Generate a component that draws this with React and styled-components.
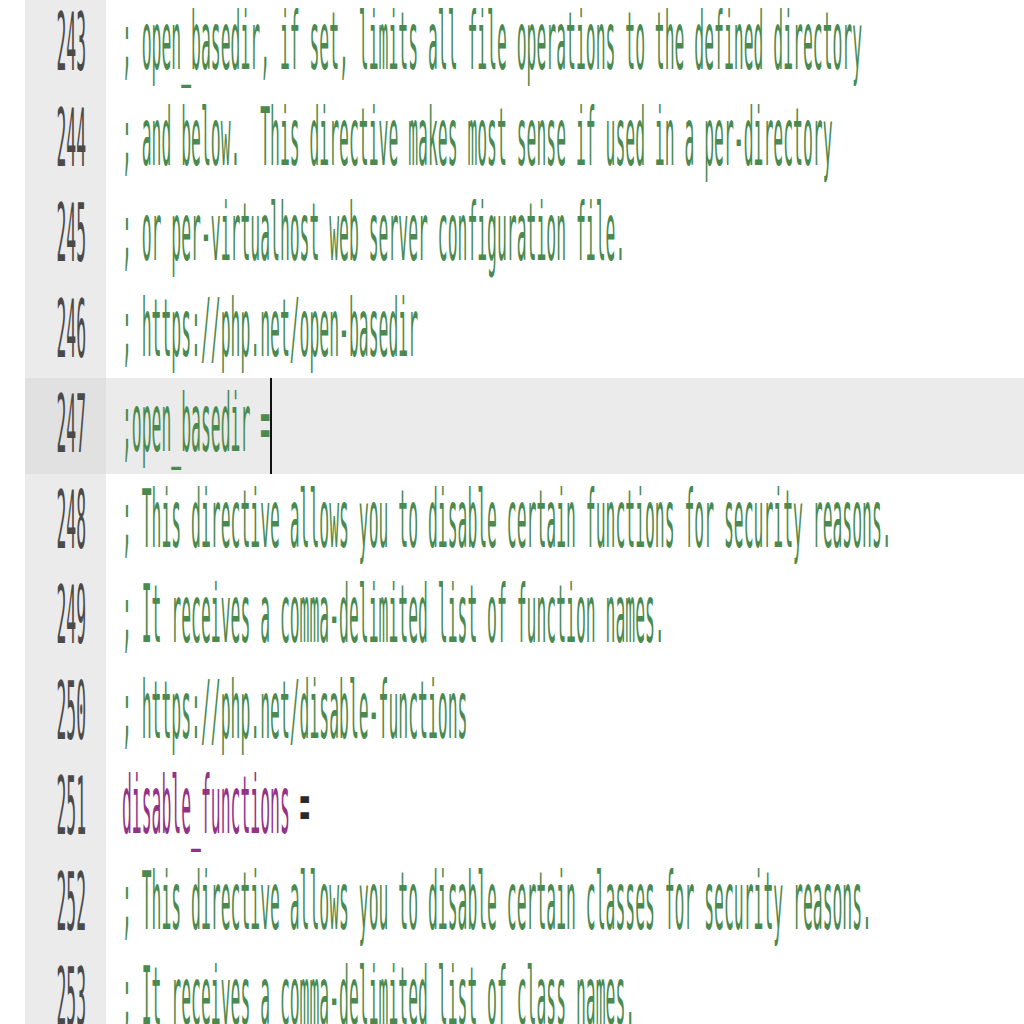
import React from "react";
import styled, { createGlobalStyle } from "styled-components";

const GlobalStyle = createGlobalStyle`
  html, body {
    margin: 0;
    padding: 0;
    background: #ffffff;
  }
`;

const Page = styled.div`
  width: 1024px;
  height: 1024px;
  overflow: hidden;
  background: #ffffff;
  padding-left: 25px;
  box-sizing: border-box;
`;

const Editor = styled.div`
  display: flex;
  flex-direction: column;
  margin-top: -4px;
  font-family: "DejaVu Sans Mono", "Liberation Mono", monospace;
  font-size: 16.4px;
`;

const Row = styled.div`
  display: grid;
  grid-template-columns: 81px 1fr;
  height: 95.5px;
  background: ${(p) => (p.$active ? "#ebebeb" : "#ffffff")};
`;

const Num = styled.div`
  display: flex;
  align-items: center;
  justify-content: flex-end;
  padding-right: 20px;
  background: ${(p) => (p.$active ? "#e1e1e1" : "#ebebeb")};
  color: #4a4a4a;
`;

const Code = styled.div`
  display: flex;
  align-items: stretch;
  padding-left: 16px;
`;

const Text = styled.span`
  display: inline-flex;
  align-items: center;
  white-space: pre;
  transform: scaleY(4.9);
  transform-origin: center;
`;

const Tok = styled.span`
  color: ${(p) => p.$color};
`;

const Caret = styled.span`
  width: 2px;
  background: #111111;
`;

const GREEN = "#4a8a50";
const PURPLE = "#923388";
const DARK = "#2a2a2a";

const lines = [
  { n: 243, t: [["; open_basedir, if set, limits all file operations to the defined directory", GREEN]] },
  { n: 244, t: [["; and below.  This directive makes most sense if used in a per-directory", GREEN]] },
  { n: 245, t: [["; or per-virtualhost web server configuration file.", GREEN]] },
  { n: 246, t: [["; https://php.net/open-basedir", GREEN]] },
  { n: 247, t: [[";open_basedir =", GREEN]], active: true },
  { n: 248, t: [["; This directive allows you to disable certain functions for security reasons.", GREEN]] },
  { n: 249, t: [["; It receives a comma-delimited list of function names.", GREEN]] },
  { n: 250, t: [["; https://php.net/disable-functions", GREEN]] },
  { n: 251, t: [["disable_functions", PURPLE], [" =", DARK]] },
  { n: 252, t: [["; This directive allows you to disable certain classes for security reasons.", GREEN]] },
  { n: 253, t: [["; It receives a comma-delimited list of class names.", GREEN]] },
];

export default function App() {
  return (
    <Page>
      <GlobalStyle />
      <Editor>
        {lines.map((l) => (
          <Row key={l.n} $active={l.active}>
            <Num $active={l.active}>
              <Text>{l.n}</Text>
            </Num>
            <Code>
              <Text>
                {l.t.map(([s, c], i) => (
                  <Tok key={i} $color={c}>
                    {s}
                  </Tok>
                ))}
              </Text>
              {l.active && <Caret />}
            </Code>
          </Row>
        ))}
      </Editor>
    </Page>
  );
}
